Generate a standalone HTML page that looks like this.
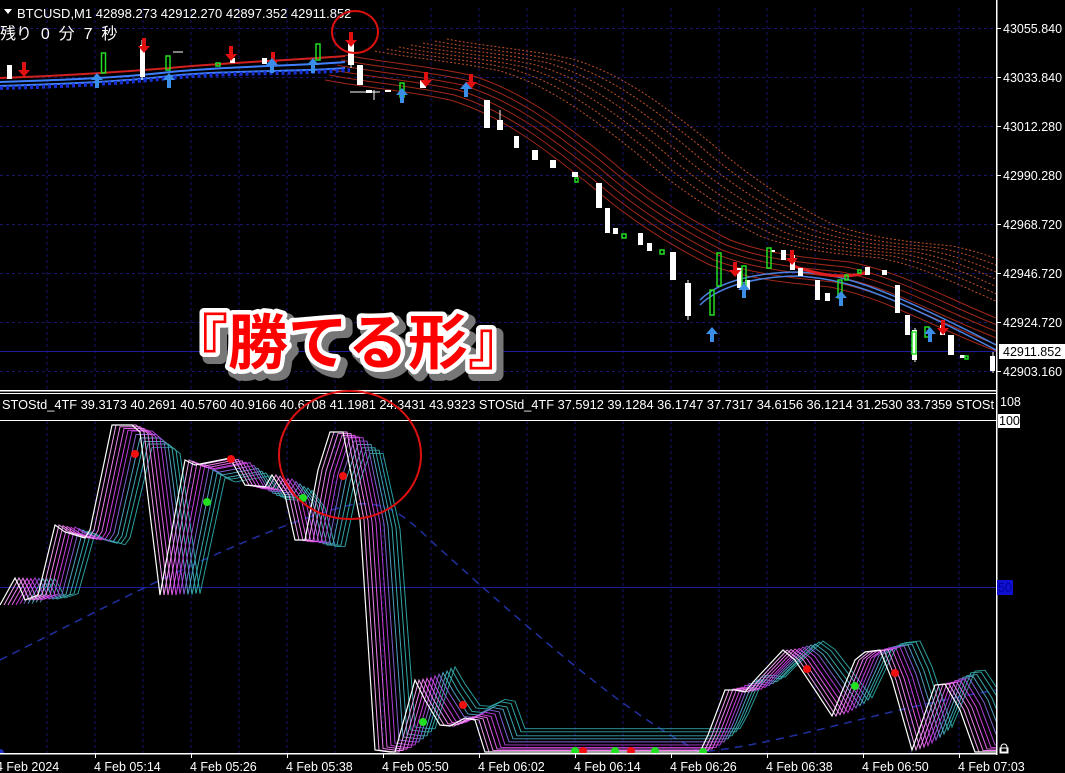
<!DOCTYPE html>
<html><head><meta charset="utf-8"><style>
html,body{margin:0;padding:0;background:#000;}
body{width:1065px;height:773px;overflow:hidden;position:relative;font-family:"Liberation Sans","Noto Sans CJK JP",sans-serif;}
svg{position:absolute;left:0;top:0;}
text{font-family:"Liberation Sans","Noto Sans CJK JP",sans-serif;}
</style></head><body>
<svg width="1065" height="773" viewBox="0 0 1065 773" xmlns="http://www.w3.org/2000/svg">
<defs>
<path id="rib" d="M345,55 C380,62 430,66 470,75 C520,90 560,120 610,160 C650,195 690,220 730,240 C770,255 810,258 850,262 C900,272 940,295 996,318 L1100,360" fill="none"/>
<polyline id="w" fill="none" points="0,605 15,578 20,588 25,600 38,595 55,525 65,532 85,538 90,530 112,425 132,425 140,432 160,595 185,460 195,465 230,458 245,485 265,487 272,475 285,495 295,540 305,540 318,470 330,432 343,432 360,520 375,750 390,752 395,752 415,680 425,700 440,725 450,726 465,718 475,720 485,752 700,752 708,735 725,690 735,690 745,692 755,680 783,650 795,660 815,690 832,716 855,660 865,652 880,650 892,680 912,750 935,685 945,684 960,710 975,752 996,752"/>
<clipPath id="c1"><rect x="0" y="0" width="996" height="390"/></clipPath>
<clipPath id="c2"><rect x="0" y="421" width="996" height="333"/></clipPath>
</defs>
<!-- grid -->
<g stroke="#16166a" stroke-width="1" stroke-dasharray="3,3">
<path d="M47,8V390M95,8V390M143,8V390M191,8V390M239,8V390M287,8V390M335,8V390M383,8V390M431,8V390M479,8V390M527,8V390M575,8V390M623,8V390M671,8V390M719,8V390M767,8V390M815,8V390M863,8V390M911,8V390M959,8V390"/>
<path d="M47,421V754M95,421V754M143,421V754M191,421V754M239,421V754M287,421V754M335,421V754M383,421V754M431,421V754M479,421V754M527,421V754M575,421V754M623,421V754M671,421V754M719,421V754M767,421V754M815,421V754M863,421V754M911,421V754M959,421V754"/>
<path d="M0,28.5H996M0,77.5H996M0,126.5H996M0,175.5H996M0,224.5H996M0,273.5H996M0,322.5H996M0,371.5H996"/>
</g>
<line x1="0" y1="351.5" x2="996" y2="351.5" stroke="#1c1c9a"/>
<line x1="0" y1="587.5" x2="996" y2="587.5" stroke="#1c1c9a"/>
<!-- main chart ribbons -->
<g clip-path="url(#c1)">
<g fill="none" stroke="#c05028" stroke-width="1" stroke-dasharray="2,2">
<use href="#rib" transform="translate(30,-4)"/><use href="#rib" transform="translate(42,-6)"/><use href="#rib" transform="translate(54,-8)"/><use href="#rib" transform="translate(66,-10)"/><use href="#rib" transform="translate(78,-12)"/><use href="#rib" transform="translate(90,-14)"/><use href="#rib" transform="translate(102,-16)"/>
</g>
<g fill="none" stroke="#a02818" stroke-width="1">
<use href="#rib" transform="translate(0,0)"/><use href="#rib" transform="translate(-4,5)"/><use href="#rib" transform="translate(-8,10)"/><use href="#rib" transform="translate(-12,15)"/><use href="#rib" transform="translate(-16,20)"/><use href="#rib" transform="translate(-20,25)"/>
</g>
<path d="M0,78 C60,76 120,72 170,68 C230,62 300,60 345,56" fill="none" stroke="#d02020" stroke-width="2"/>
<path d="M0,82 C60,80 120,78 170,72 C230,66 300,66 345,62 M0,86 C60,84 120,82 170,76 C230,70 300,72 345,68" fill="none" stroke="#4080ff" stroke-width="2"/>
<path d="M0,88 C80,86 120,83 170,78 C230,72 300,74 350,70" fill="none" stroke="#1830d0" stroke-width="4" stroke-dasharray="3,3"/>
<path d="M700,300 C720,280 760,272 800,272 C840,275 870,280 996,345 M700,305 C720,285 760,276 800,276 C840,280 870,284 996,350" fill="none" stroke="#4a80e0" stroke-width="1.5"/>
<path d="M790,265 C820,275 840,280 870,272" stroke="#e02020" stroke-width="3" fill="none"/>
<!-- white candles -->
<path fill="#fff" d="M7,65h5v14h-5zM140,45h5v32h-5zM230,58h5v5h-5zM262,58h5v6h-5zM348,40h6v25h-6zM357,65h6v20h-6zM366,90h6v3h-6zM385,90h6v2h-6zM420,80h6v8h-6zM484,100h6v28h-6zM497,120h6v10h-6zM514,136h5v12h-5zM532,150h6v10h-6zM550,160h6v8h-6zM572,172h6v5h-6zM596,183h6v25h-6zM605,208h5v25h-5zM613,228h5v6h-5zM638,233h5v12h-5zM647,243h5v8h-5zM670,252h6v28h-6zM685,283h6v33h-6zM737,268h5v20h-5zM745,280h5v10h-5zM771,250h4v2h-4zM781,250h5v10h-5zM790,255h5v15h-5zM798,268h5v8h-5zM815,280h5v20h-5zM825,293h5v8h-5zM865,267h5v8h-5zM882,270h5v5h-5zM895,285h5v28h-5zM905,315h5v20h-5zM912,330h5v30h-5zM940,325h5v10h-5zM948,335h6v20h-6zM960,355h5v3h-5zM990,356h5v15h-5z"/>
<path stroke="#fff" stroke-width="1" d="M142,40V80M351,36V68M374,90V100M688,280V320M915,328V362M993,352V373M500,110V130M173,52H183M350,92H380"/>
<!-- green candles -->
<path fill="none" stroke="#22dd22" stroke-width="1.5" d="M101.5,53h4v20h-4zM166,56h4v14h-4zM216,63h4v3h-4zM316,44h4v16h-4zM400,83h4v14h-4zM575,178h3v4h-3zM622,234h4v4h-4zM660,250h4v4h-4zM710,290h4v25h-4zM717,253h4v33h-4zM742,266h4v20h-4zM767,248h4v20h-4zM838,280h4v18h-4zM845,275h3v5h-3zM858,270h3v3h-3zM912,332h4v22h-4zM925,327h4v10h-4zM965,356h3v3h-3z"/>
<!-- arrows -->
<g fill="#e01010"><path d="M22,62v8h-4l6,7 6-7h-4v-8zM142,38v8h-4l6,7 6-7h-4v-8zM229,46v8h-4l6,7 6-7h-4v-8zM271,52v8h-4l6,7 6-7h-4v-8zM349,32v8h-4l6,7 6-7h-4v-8zM424,72v8h-4l6,7 6-7h-4v-8zM469,74v8h-4l6,7 6-7h-4v-8zM733,262v8h-4l6,7 6-7h-4v-8zM790,250v8h-4l6,7 6-7h-4v-8zM941,320v8h-4l6,7 6-7h-4v-8z"/></g>
<g fill="#3a8ee8"><path d="M95,88v-8h-4l6-7 6,7h-4v8zM167,88v-8h-4l6-7 6,7h-4v8zM270,73v-8h-4l6-7 6,7h-4v8zM311,73v-8h-4l6-7 6,7h-4v8zM400,103v-8h-4l6-7 6,7h-4v8zM464,97v-8h-4l6-7 6,7h-4v8zM710,342v-8h-4l6-7 6,7h-4v8zM742,298v-8h-4l6-7 6,7h-4v8zM839,306v-8h-4l6-7 6,7h-4v8zM928,342v-8h-4l6-7 6,7h-4v8z"/></g>
</g>
<!-- header -->
<path d="M4,9h8l-4,5z" fill="#fff"/>
<text x="17" y="18" fill="#fff" font-size="13">BTCUSD,M1  42898.273 42912.270 42897.352 42911.852</text>
<text x="0" y="39" fill="#fff" font-size="16" xml:space="preserve">残り  0  分  7  秒</text>
<ellipse cx="355" cy="32" rx="23" ry="21" fill="none" stroke="#dd1010" stroke-width="2"/>
<!-- big label -->
<text x="168" y="364" font-size="60" font-weight="bold" fill="#888" stroke="#777" stroke-width="13" stroke-linejoin="round" transform="translate(5,5)">『勝てる形』</text>
<text x="168" y="364" font-size="60" font-weight="bold" fill="#f00" stroke="#fff" stroke-width="9" stroke-linejoin="round">『勝てる形』</text>
<text x="168" y="364" font-size="60" font-weight="bold" fill="#f00">『勝てる形』</text>
<!-- separators -->
<rect x="0" y="390" width="997" height="1.5" fill="#fff"/>
<rect x="0" y="393" width="997" height="1" fill="#fff"/>
<rect x="0" y="420" width="997" height="1" fill="#fff"/>
<text x="2" y="409" fill="#fff" font-size="12.5" textLength="992" lengthAdjust="spacingAndGlyphs">STOStd_4TF 39.3173 40.2691 40.5760 40.9166 40.6708 41.1981 24.3431 43.9323  STOStd_4TF 37.5912 39.1284 36.1747 37.7317 34.6156 36.1214 31.2530 33.7359  STOSt</text>
<!-- stochastic -->
<g clip-path="url(#c2)">
<path d="M0,660 C100,610 250,530 350,505 C380,500 400,510 430,540 C530,630 620,710 700,752 C780,745 880,710 996,690" fill="none" stroke="#2030a0" stroke-width="1.5" stroke-dasharray="8,6"/>
<g stroke-width="1" fill="none">
<use href="#w" stroke="#2aa0a0" transform="translate(40,82) scale(1,0.86)"/>
<use href="#w" stroke="#30a8a8" transform="translate(36,70) scale(1,0.88)"/>
<use href="#w" stroke="#3aa8b0" transform="translate(32,59) scale(1,0.9)"/>
<use href="#w" stroke="#50a0c0" transform="translate(28,47) scale(1,0.92)"/>
<use href="#w" stroke="#8060d0" transform="translate(24,35) scale(1,0.94)"/>
<use href="#w" stroke="#b040d8" transform="translate(20,23) scale(1,0.96)"/>
<use href="#w" stroke="#d040e0" transform="translate(16,18) scale(1,0.97)"/>
<use href="#w" stroke="#e060e8" transform="translate(12,12) scale(1,0.98)"/>
<use href="#w" stroke="#f080f0" transform="translate(8,6) scale(1,0.99)"/>
<use href="#w" stroke="#f0a0f0" transform="translate(4,0)"/>
<use href="#w" stroke="#ffffff" stroke-width="1.2"/>
</g>
<g fill="#f01010"><circle cx="135" cy="454" r="4"/><circle cx="231" cy="459" r="4"/><circle cx="343" cy="476" r="4"/><circle cx="463" cy="705" r="4"/><circle cx="583" cy="751" r="4"/><circle cx="631" cy="751" r="4"/><circle cx="807" cy="669" r="4"/><circle cx="895" cy="673" r="4"/></g>
<g fill="#20e020"><circle cx="207" cy="502" r="4"/><circle cx="303" cy="498" r="4"/><circle cx="423" cy="722" r="4"/><circle cx="575" cy="751" r="4"/><circle cx="615" cy="751" r="4"/><circle cx="655" cy="751" r="4"/><circle cx="703" cy="752" r="4"/><circle cx="855" cy="686" r="4"/></g>
<path d="M0,749 a4,4 0 0 1 0,8z" fill="#2030c0"/>
</g>
<ellipse cx="350" cy="455" rx="71" ry="64" fill="none" stroke="#dd1010" stroke-width="2"/>
<!-- axes -->
<rect x="996" y="0" width="1.5" height="755" fill="#fff"/>
<rect x="0" y="753" width="997" height="1.5" fill="#fff"/>
<g stroke="#fff"><path d="M997,28.5h4M997,77.5h4M997,126.5h4M997,175.5h4M997,224.5h4M997,273.5h4M997,322.5h4M997,371.5h4M95.5,754v4M191.5,754v4M287.5,754v4M383.5,754v4M479.5,754v4M575.5,754v4M671.5,754v4M767.5,754v4M863.5,754v4M959.5,754v4"/></g>
<g fill="#fff" font-size="12.5">
<text x="1003" y="33">43055.840</text><text x="1003" y="82">43033.840</text><text x="1003" y="131">43012.280</text><text x="1003" y="180">42990.280</text><text x="1003" y="229">42968.720</text><text x="1003" y="278">42946.720</text><text x="1003" y="327">42924.720</text><text x="1003" y="376">42903.160</text>
</g>
<rect x="999" y="344" width="66" height="15" fill="#fff"/>
<text x="1003" y="356" fill="#000" font-size="12.5">42911.852</text>
<text x="1000" y="406" fill="#fff" font-size="12.5">108</text>
<rect x="998" y="414" width="22" height="14" fill="#fff"/>
<text x="999" y="425" fill="#000" font-size="12.5">100</text>
<rect x="997" y="580" width="16" height="15" fill="#1010d0"/>
<text x="998" y="592" fill="#0000a0" font-size="12.5">50</text>
<path d="M1001,752v-5a3,3 0 0 1 6,0v5zM1000,748h8v5h-8z" fill="none" stroke="#fff"/>
<g fill="#fff" font-size="12.5">
<text x="-4" y="771">4 Feb 2024</text><text x="94" y="771">4 Feb 05:14</text><text x="190" y="771">4 Feb 05:26</text><text x="286" y="771">4 Feb 05:38</text><text x="382" y="771">4 Feb 05:50</text><text x="478" y="771">4 Feb 06:02</text><text x="574" y="771">4 Feb 06:14</text><text x="670" y="771">4 Feb 06:26</text><text x="766" y="771">4 Feb 06:38</text><text x="862" y="771">4 Feb 06:50</text><text x="958" y="771">4 Feb 07:03</text>
</g>
</svg>
</body></html>
